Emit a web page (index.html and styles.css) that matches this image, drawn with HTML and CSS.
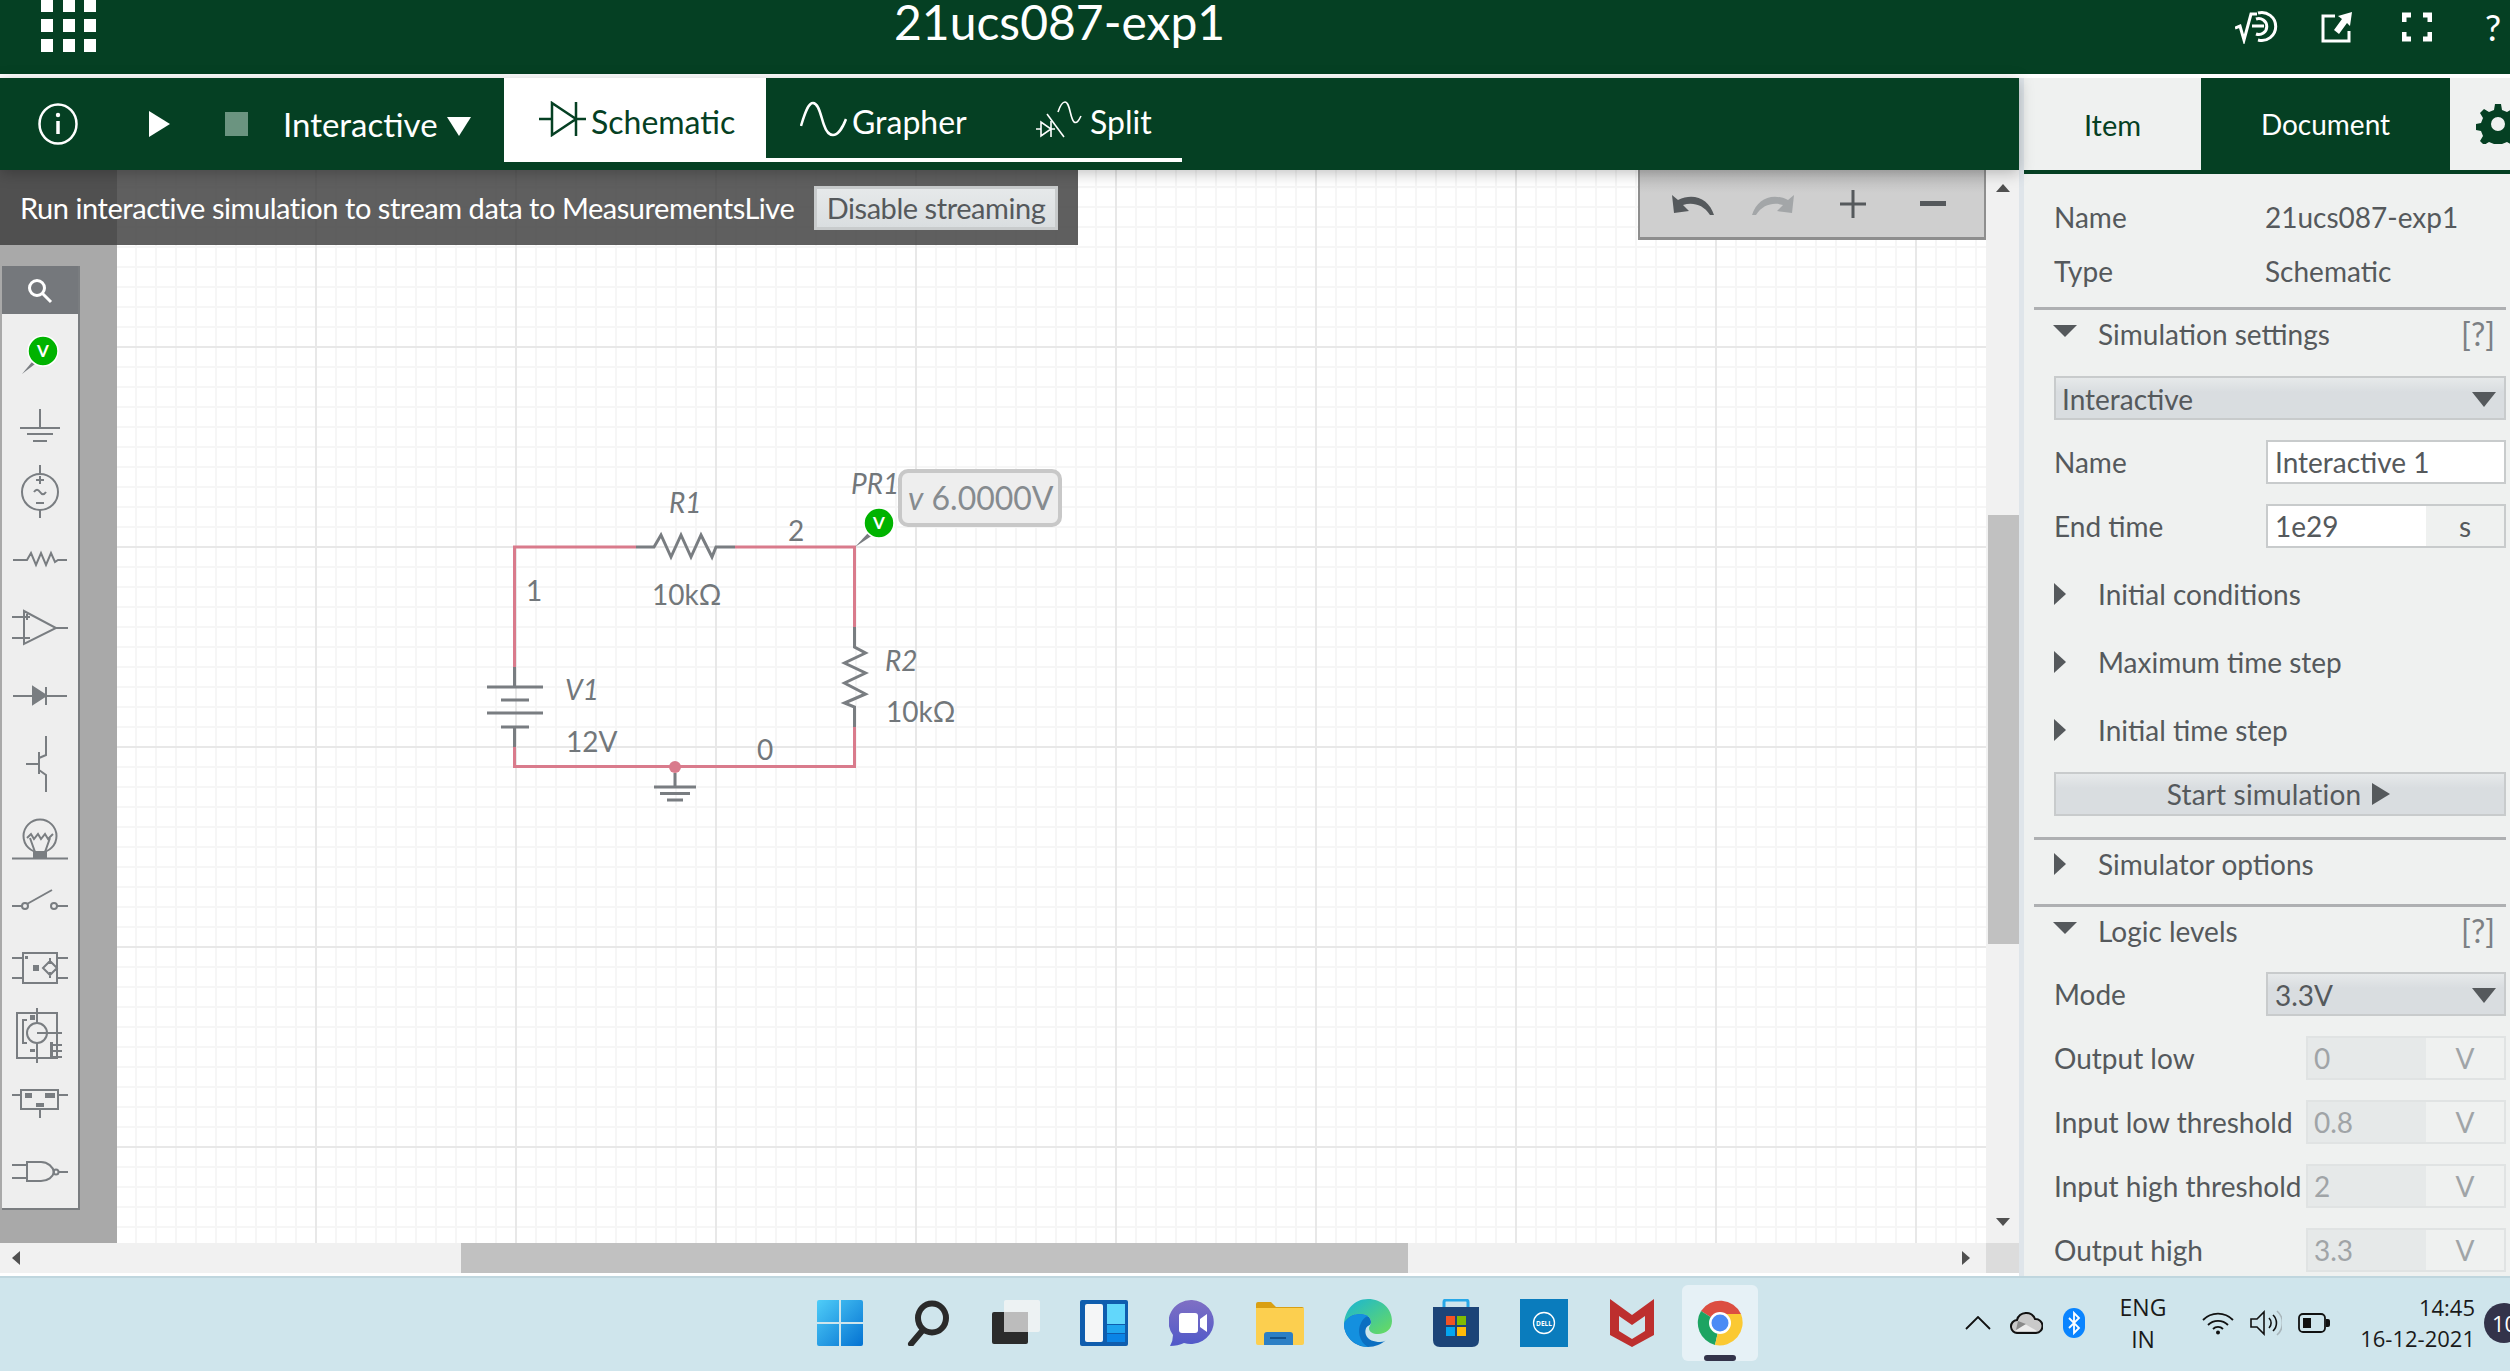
FILE: index.html
```html
<!DOCTYPE html>
<html lang="en">
<head>
    <meta charset="UTF-8">
    <title>21ucs087-exp1</title>
    <link rel="stylesheet" href="styles.css">
</head>
<body>
<div class="app">
    <header class="topbar">
        <svg class="apps" width="56" height="53" viewBox="0 0 56 53" fill="#fff">
            <rect x="0" y="0" width="12" height="12"/><rect x="22" y="0" width="12" height="12"/><rect x="43" y="0" width="12" height="12"/>
            <rect x="0" y="19" width="12" height="13"/><rect x="22" y="19" width="12" height="13"/><rect x="43" y="19" width="12" height="13"/>
            <rect x="0" y="39" width="12" height="13"/><rect x="22" y="39" width="12" height="13"/><rect x="43" y="39" width="12" height="13"/>
        </svg>
        <div class="doc-title">21ucs087-exp1</div>
        <div class="top-icons">
            <svg width="48" height="34" viewBox="0 0 48 34" fill="none" stroke="#fff" stroke-width="3">
                <path d="M0 18l5-2 4 14 7-26h6"/>
                <path d="M23 3a14 14 0 1 1 0 27"/>
                <path d="M21 9a8 8 0 1 1 0 15M17 16h12"/>
            </svg>
            <svg class="icon-popout" width="32" height="32" viewBox="0 0 32 32" fill="none" stroke="#fff" stroke-width="3">
                <path d="M14 5H2v25h26V20"/>
                <path d="M31 1l-14 4 4 3-8 11 5 4 8-11 3 3z" fill="#fff" stroke="none"/>
            </svg>
            <svg class="icon-full" width="30" height="30" viewBox="0 0 30 30" fill="none" stroke="#fff" stroke-width="5">
                <path d="M2 10V3h7M21 3h7v7M28 20v7h-7M9 27H2v-7"/>
            </svg>
            <span class="top-help">?</span>
        </div>
    </header>

    <div class="workspace">
        <main class="stage">
            <nav class="toolbar">
                <svg class="tool-info" width="40" height="42" viewBox="0 0 40 42" fill="none" stroke="#fff" stroke-width="2.5">
                    <ellipse cx="20" cy="21" rx="18.5" ry="19.5"/>
                    <path d="M20 18v13" stroke-width="3.5"/>
                    <circle cx="20" cy="12" r="2.2" fill="#fff" stroke="none"/>
                </svg>
                <span class="tool-play"></span>
                <span class="tool-stop"></span>
                <span class="tool-mode">Interactive <i class="tri-down"></i></span>
                <div class="view-tabs">
                    <div class="view-tab view-tab-on">
                        <svg width="47" height="36" viewBox="0 0 47 36" fill="none" stroke="#054023" stroke-width="2.5">
                            <path d="M0 18h13M37 18h10M37 1v34M13 2l24 16-24 16z"/>
                        </svg>
                        Schematic
                    </div>
                    <div class="view-tab view-tab-grapher">
                        <svg width="47" height="36" viewBox="0 0 47 36" fill="none" stroke="#fff" stroke-width="2.5">
                            <path d="M1 25C6 8 9 2 13 2c6 0 8 14 11 22 2 6 5 10 9 10 5 0 10-8 13-16"/>
                        </svg>
                        Grapher
                    </div>
                    <div class="view-tab view-tab-split">
                        <svg width="46" height="38" viewBox="0 0 46 38" fill="none" stroke="#fff" stroke-width="1.6">
                            <path d="M0 29h5M5 22v14l10-7-10-7zM15 21v16M15 29h4"/>
                            <path d="M11 14l17 23"/>
                            <path d="M22 12c2-6 4-10 7-10 5 0 5 16 9 20 3 2 5-2 7-6"/>
                        </svg>
                        Split
                    </div>
                </div>
            </nav>

            <section class="canvas-row">
                <aside class="palette-col">
                    <div class="palette">
                        <div class="palette-search">
                            <svg width="26" height="26" viewBox="0 0 26 26" fill="none" stroke="#fff" stroke-width="3">
                                <circle cx="10" cy="10" r="7.5"/><path d="M15.500 15.500L24 24"/>
                            </svg>
                        </div>
                        <svg class="palette-parts" width="76" height="894" viewBox="2 314 76 894" fill="none" stroke="#797d81" stroke-width="2">
                            <path d="M22 374l10-12 3 2z" fill="#797d81" stroke="none"/>
                            <circle cx="43" cy="351" r="15" fill="#00b300" stroke="#fff" stroke-width="1.500"/>
                            <text class="probe-v" x="43" y="357" text-anchor="middle">V</text>

                            <path d="M40 409v19M20 428h40M27 434h26M33 441h14"/>

                            <path d="M40 465v10M40 510v8M36 480h8M40 476v8M36 503h8M34 492c2-3 4-3 6 0s4 3 6 0"/>
                            <circle cx="40" cy="492" r="18"/>

                            <path d="M13 560h14l4-7 5 12 5-12 5 12 5-12 4 9 3-2h9"/>

                            <path d="M24 611v33l32-16zM12 617h16M12 638h18M56 628h12M24 617h6M27 614v6"/>

                            <path d="M13 696h20M46 696h21M46 687v18"/>
                            <path d="M33 687v17l13-8.500z" fill="#797d81"/>

                            <path d="M46 736v19l-7 3M39 752v22M26 764h13M39 770l7 5v17"/>

                            <circle cx="40" cy="836" r="16.500"/>
                            <path d="M27 838l4-4 3 5 4-5 3 5 4-5 3 5 5-5M30 838l5 14M50 838l-5 14M12 858.500h56"/>
                            <path d="M34 852h12v6H34z" fill="#797d81"/>

                            <path d="M12 906h10M27 904l25-14M57 906h11"/>
                            <circle cx="25" cy="906" r="3"/><circle cx="54" cy="906" r="3"/>

                            <path d="M23 953h34v30H23zM12 958h11M57 958h11M12 978h11M57 978h11M50 961l7 7-7 7-7-7zM50 958v6M50 972v6"/>
                            <path d="M33 965h6v6h-6zM25 956h3v3h-3z" fill="#797d81" stroke="none"/>

                            <path d="M17 1013h40v45H17zM37 1008v15M37 1043v20M27 1020h-4v23h4M37 1033h25M50 1045h12M50 1051h12M50 1057h12"/>
                            <circle cx="37" cy="1033" r="10"/>
                            <path d="M30 1015h5v5h-5zM30 1049h5v3h-5zM50 1042h3v14h-3z" fill="#797d81" stroke="none"/>

                            <path d="M21 1090h37v19H21zM12 1095h9M58 1095h10M40 1109v9"/>
                            <path d="M25 1093h7v5h-7zM45 1093h10v5H45zM36 1103h8v4h-8z" fill="#797d81" stroke="none"/>

                            <path d="M12 1165h15M12 1178h15M27 1162h14c7 0 12 5 13 10-1 5-6 9-13 9H27zM59 1172h9"/>
                            <circle cx="56" cy="1172" r="2.500"/>
                        </svg>
                    </div>
                </aside>

                <div class="canvas">
                    <svg class="circuit" width="1869" height="1073" viewBox="117 170 1869 1073" fill="none">
                        <g class="wire">
                            <path d="M514.500 667V547H636M735 547H854.500V627M854.500 727V766.500H514.500V747"/>
                            <circle class="node" cx="675" cy="767" r="6"/>
                        </g>
                        <g class="part">
                            <path d="M636 547h18l7-12 10 22 10-22 10 22 10-22 11 22 4-10h19"/>
                            <path d="M854.500 627v20l11 6-21 10 21 10-21 10 21 11-21 9 10 4v20"/>
                            <path d="M514.500 667v20M487 687h56M501 700h28M487 713h56M501 727h28M514.500 727v20"/>
                            <path d="M675 773v14M654 787h42M660 793.500h30M667 800h16"/>
                        </g>
                        <path d="M855 547l14-15 4 3z" fill="#797d81"/>
                        <circle cx="879" cy="523" r="15" fill="#00b300" stroke="#fff" stroke-width="1.500"/>
                        <text class="probe-v" x="879" y="529" text-anchor="middle">V</text>
                        <rect class="readout" x="900" y="471" width="160" height="54" rx="8"/>
                        <text class="lbl readout-text" x="908" y="510"><tspan class="it">v</tspan> 6.0000V</text>
                        <text class="lbl it" x="669" y="513">R1</text>
                        <text class="lbl" x="788" y="541">2</text>
                        <text class="lbl it" x="851" y="494">PR1</text>
                        <text class="lbl" x="526" y="601">1</text>
                        <text class="lbl" x="652" y="605">10kΩ</text>
                        <text class="lbl it" x="885" y="671">R2</text>
                        <text class="lbl" x="886" y="722">10kΩ</text>
                        <text class="lbl it" x="565" y="700">V1</text>
                        <text class="lbl" x="566" y="752">12V</text>
                        <text class="lbl" x="757" y="760">0</text>
                    </svg>
                </div>

                <div class="vscroll">
                    <i class="arrow-up"></i>
                    <div class="vscroll-track"><div class="vscroll-thumb"></div></div>
                    <i class="arrow-dn"></i>
                </div>

                <div class="stream-banner">
                    <span>Run interactive simulation to stream data to MeasurementsLive</span>
                    <button class="stream-btn">Disable streaming</button>
                </div>

                <div class="zoom-tools">
                    <span class="zoom-btn"><svg width="42" height="22" viewBox="0 0 42 22" fill="#55595c"><path d="M0 2l2 18 15-2-6-6c9-3 20-1 27 10h4C37 6 22-1 6 7z"/></svg></span>
                    <span class="zoom-btn"><svg width="42" height="22" viewBox="0 0 42 22" fill="#a3a6a8"><path d="M42 2l-2 18-15-2 6-6c-9-3-20-1-27 10H0C5 6 20-1 36 7z"/></svg></span>
                    <span class="zoom-btn"><svg width="26" height="28" viewBox="0 0 26 28" fill="#55595c"><path d="M0 12.500h26v3H0zM11.500 0h3v28h-3z"/></svg></span>
                    <span class="zoom-btn"><svg width="26" height="6" viewBox="0 0 26 6" fill="#55595c"><path d="M0 0h26v5H0z"/></svg></span>
                </div>
            </section>

            <div class="hscroll">
                <i class="arrow-lt"></i>
                <div class="hscroll-thumb"></div>
                <i class="arrow-rt"></i>
                <div class="hscroll-corner"></div>
            </div>
        </main>

        <aside class="side">
            <div class="side-tabs">
                <div class="side-tab side-tab-item">Item</div>
                <div class="side-tab side-tab-doc">Document</div>
                <div class="side-tab side-tab-gear">
                    <svg width="44" height="40" viewBox="0 0 44 40" fill="#054023">
                        <path fill-rule="evenodd" d="M19 0h6l1 6 5 2 5-3 4 4-3 5 2 5 5 1v6l-5 1-2 5 3 5-4 4-5-3-5 2-1 6h-6l-1-6-5-2-5 3-4-4 3-5-2-5-5-1v-6l5-1 2-5-3-5 4-4 5 3 5-2zM22 13a7 7 0 1 0 0 14 7 7 0 0 0 0-14z"/>
                    </svg>
                </div>
            </div>

            <div class="side-body">
                <div class="info-row"><span class="info-key">Name</span><span>21ucs087-exp1</span></div>
                <div class="info-row"><span class="info-key">Type</span><span>Schematic</span></div>

                <div class="sec-line"></div>
                <div class="sec-head"><i class="tri-open"></i><span>Simulation settings</span><em>[?]</em></div>
                <div class="picker picker-wide">Interactive<i class="tri-pick"></i></div>
                <div class="field"><label>Name</label><div class="box box-wide">Interactive 1</div></div>
                <div class="field"><label>End time</label><div class="box box-wide box-unit"><span>1e29</span><b>s</b></div></div>
                <div class="fold fold-first"><i class="tri-shut"></i>Initial conditions</div>
                <div class="fold"><i class="tri-shut"></i>Maximum time step</div>
                <div class="fold"><i class="tri-shut"></i>Initial time step</div>
                <button class="start-btn">Start simulation <i class="tri-start"></i></button>

                <div class="sec-line sec-line-gap"></div>
                <div class="sec-head"><i class="tri-shut"></i><span>Simulator options</span></div>
                <div class="sec-line sec-line-mid"></div>
                <div class="sec-head"><i class="tri-open"></i><span>Logic levels</span><em>[?]</em></div>
                <div class="field field-mode"><label>Mode</label><div class="picker box-wide">3.3V<i class="tri-pick"></i></div></div>
                <div class="field"><label>Output low</label><div class="box box-off"><span>0</span><b>V</b></div></div>
                <div class="field"><label>Input low threshold</label><div class="box box-off"><span>0.8</span><b>V</b></div></div>
                <div class="field"><label>Input high threshold</label><div class="box box-off"><span>2</span><b>V</b></div></div>
                <div class="field"><label>Output high</label><div class="box box-off"><span>3.3</span><b>V</b></div></div>
            </div>
        </aside>
    </div>

    <footer class="taskbar">
        <div class="slot">
            <svg width="46" height="46" viewBox="0 0 46 46">
                <defs>
                    <linearGradient id="winBlue" x1="0" y1="0" x2="1" y2="1"><stop offset="0" stop-color="#4fcdf8"/><stop offset="1" stop-color="#0472d2"/></linearGradient>
                </defs>
                <path d="M2 0h20v22H0V2a2 2 0 0 1 2-2zM24 0h20a2 2 0 0 1 2 2v20H24zM0 24h22v22H2a2 2 0 0 1-2-2zM24 24h22v20a2 2 0 0 1-2 2H24z" fill="url(#winBlue)"/>
            </svg>
        </div>
        <div class="slot">
            <svg width="44" height="46" viewBox="0 0 44 46" fill="none" stroke="#2a2a2a" stroke-width="6">
                <ellipse cx="26" cy="18" rx="14" ry="14.500"/><path d="M16 31L5 44" stroke-linecap="round"/>
            </svg>
        </div>
        <div class="slot">
            <svg width="48" height="46" viewBox="0 0 48 46">
                <rect x="0" y="12" width="36" height="32" rx="2" fill="#2b2b2b"/>
                <rect x="12" y="0" width="36" height="32" rx="2" fill="#f2f4f4" fill-opacity=".85"/>
                <rect x="12" y="12" width="24" height="20" fill="#bcbcbc"/>
            </svg>
        </div>
        <div class="slot">
            <svg width="48" height="46" viewBox="0 0 48 46">
                <rect width="48" height="46" rx="2" fill="#0f5dae"/>
                <rect x="5" y="4" width="18" height="38" rx="2" fill="#f5f6f7"/>
                <rect x="27" y="4" width="18" height="20" fill="#62d7fb"/>
                <rect x="27" y="25" width="18" height="8" fill="#1ea4ee"/>
                <rect x="27" y="34" width="18" height="8" fill="#0a84e6"/>
            </svg>
        </div>
        <div class="slot">
            <svg width="46" height="46" viewBox="0 0 46 46">
                <defs>
                    <linearGradient id="chatFill" x1="0" y1="0" x2="0" y2="1"><stop offset="0" stop-color="#7f70c4"/><stop offset="1" stop-color="#5059c9"/></linearGradient>
                </defs>
                <path d="M23 0a23 22 0 1 1-8 43q-6 3-14 3 3-5 3-11A23 22 0 0 1 23 0z" fill="url(#chatFill)"/>
                <rect x="10" y="13" width="19" height="20" rx="3" fill="#fff"/>
                <path d="M31 19l7-5v18l-7-5z" fill="#fff"/>
            </svg>
        </div>
        <div class="slot">
            <svg width="48" height="44" viewBox="0 0 48 44">
                <path d="M0 3a2 2 0 0 1 2-2h13l5 5h26a2 2 0 0 1 2 2v6H0z" fill="#d99f13"/>
                <path d="M0 7h48v35a2 2 0 0 1-2 2H2a2 2 0 0 1-2-2z" fill="#fccf4f"/>
                <path d="M8 44V34a3 3 0 0 1 3-3h23a3 3 0 0 1 3 3v10z" fill="#2c7fc5"/>
                <path d="M14 37h16" stroke="#11518f" stroke-width="2"/>
            </svg>
        </div>
        <div class="slot">
            <svg width="48" height="48" viewBox="0 0 48 48">
                <defs>
                    <linearGradient id="edgeTop" x1="0" y1="0" x2="1" y2="1"><stop offset="0" stop-color="#18b4d8"/><stop offset="1" stop-color="#6bdc5c"/></linearGradient>
                </defs>
                <path d="M24 0c14 0 24 10 24 22 0 8-6 13-14 13-5 0-9-2-9-6 0-2 2-3 2-6 0-5-5-8-11-8C10 15 2 20 0 25 1 11 10 0 24 0z" fill="url(#edgeTop)"/>
                <path d="M0 25c2-6 9-10 16-10 6 0 11 3 11 8 0 2-1 3-3 4-3 2-3 6-2 9 2 5 8 7 14 7 3 0 5-1 6-2-4 4-11 7-18 7C10 48 0 37 0 25z" fill="#0c6fc1"/>
                <path d="M17 24c-4 7-2 19 7 24C10 47 0 37 0 25c2-6 9-10 16-10 3 0 6 1 8 2-3 1-6 4-7 7z" fill="#1490df"/>
            </svg>
        </div>
        <div class="slot">
            <svg width="46" height="48" viewBox="0 0 46 48">
                <path d="M11 8V3q0-2 2-2h20q2 0 2 2v5" fill="none" stroke="#27a8e8" stroke-width="3"/>
                <path d="M0 8h46v33q0 7-7 7H7q-7 0-7-7z" fill="#1c4478"/>
                <rect x="13" y="17" width="9" height="9" fill="#f25325"/>
                <rect x="24" y="17" width="9" height="9" fill="#80bb02"/>
                <rect x="13" y="28" width="9" height="9" fill="#05a6f0"/>
                <rect x="24" y="28" width="9" height="9" fill="#ffba08"/>
            </svg>
        </div>
        <div class="slot">
            <div class="dell-tile">
                <svg width="24" height="24" viewBox="0 0 24 24" fill="none" stroke="#fff" stroke-width="1.300">
                    <circle cx="12" cy="12" r="10.500"/>
                    <text class="dell-word" x="12" y="14.500" text-anchor="middle">DELL</text>
                </svg>
            </div>
        </div>
        <div class="slot">
            <svg width="44" height="48" viewBox="0 0 44 48">
                <path d="M0 0l22 16L44 0v36L22 48 0 36zM9 17v15l13 8 13-8V17l-13 9z" fill="#bd2f2e" fill-rule="evenodd"/>
            </svg>
        </div>
        <div class="slot slot-on">
            <svg width="46" height="46" viewBox="0 0 46 46">
                <path d="M23 23L4 11A23 23 0 0 1 44 14z" fill="#dc4e41"/>
                <path d="M4 11a23 23 0 0 0 14 34l5-22z" fill="#1da462"/>
                <path d="M44 14H23v9l-5 22A23 23 0 0 0 44 14z" fill="#fbc932"/>
                <circle cx="23" cy="23" r="11" fill="#fff"/>
                <circle cx="23" cy="23" r="8.500" fill="#4b8bf5"/>
            </svg>
            <i class="slot-bar"></i>
        </div>

        <div class="tray">
            <div class="tray-slot">
                <svg width="26" height="14" viewBox="0 0 26 14" fill="none" stroke="#111" stroke-width="1.800"><path d="M1 13L13 1l12 12"/></svg>
            </div>
            <div class="tray-slot">
                <svg width="33" height="22" viewBox="0 0 33 22">
                    <path d="M8 21a6.500 6.500 0 0 1-1-13 9.500 9.500 0 0 1 18-1 7 7 0 0 1 1 14z" fill="#c9c9c9" stroke="#111" stroke-width="2"/>
                    <path d="M5 19l10-7 12 7z" fill="#ececec"/>
                    <path d="M8 9l8 3-10 6z" fill="#8a8a8a"/>
                </svg>
            </div>
            <div class="tray-slot">
                <svg width="22" height="30" viewBox="0 0 22 30">
                    <rect width="22" height="30" rx="11" fill="#0a84ff"/>
                    <path d="M6 10l10 10-5 5V5l5 5-10 10" fill="none" stroke="#fff" stroke-width="1.800"/>
                </svg>
            </div>
            <div class="tray-lang"><span>ENG</span><span>IN</span></div>
            <div class="tray-slot">
                <svg width="32" height="24" viewBox="0 0 32 24" fill="none" stroke="#111" stroke-width="1.800">
                    <path d="M1 9a21 21 0 0 1 30 0M6 14a14 14 0 0 1 20 0M11 18a7 7 0 0 1 10 0"/>
                    <circle cx="16" cy="21.500" r="2" fill="#111" stroke="none"/>
                </svg>
            </div>
            <div class="tray-slot">
                <svg width="32" height="26" viewBox="0 0 32 26" fill="none" stroke="#111" stroke-width="1.600">
                    <path d="M1 9h6l7-7v22l-7-7H1z"/>
                    <path d="M19 8a7 7 0 0 1 0 10M23 5a11 11 0 0 1 0 16"/>
                    <path d="M27 1a16 16 0 0 1 0 24" stroke="#a9b6bb"/>
                </svg>
            </div>
            <div class="tray-slot">
                <svg width="32" height="20" viewBox="0 0 32 20">
                    <rect x="1" y="1" width="26" height="18" rx="4" fill="none" stroke="#111" stroke-width="1.800"/>
                    <rect x="5" y="5" width="8" height="10" fill="#111"/>
                    <path d="M28 6h2a2 2 0 0 1 2 2v4a2 2 0 0 1-2 2h-2z" fill="#111"/>
                </svg>
            </div>
            <div class="tray-clock"><span>14:45</span><span>16-12-2021</span></div>
            <div class="tray-badge">10</div>
        </div>
    </footer>
</div>
</body>
</html>
```

FILE: styles.css
```css
* {
    box-sizing: border-box;
}
body {
    margin: 0;
    font-family: "Lato", sans-serif;
    color: #55595c;
    overflow: hidden;
}
i {
    display: block;
}
.app {
    width: 2510px;
    height: 1371px;
    display: flex;
    flex-direction: column;
    overflow: hidden;
}

/* top bar */
.topbar {
    height: 78px;
    flex: none;
    display: flex;
    align-items: flex-start;
    background-color: #054023;
    border-bottom: 4px solid #fff;
    color: #fff;
}
.apps {
    margin-left: 41px;
    flex: none;
}
.doc-title {
    margin-left: 797px;
    margin-top: -7px;
    font-size: 48px;
    line-height: 58px;
    white-space: nowrap;
}
.top-icons {
    margin-left: auto;
    display: flex;
    align-items: center;
    margin-top: 10px;
    margin-right: 9px;
}
.icon-popout {
    margin-left: 38px;
}
.icon-full {
    margin-left: 49px;
}
.top-help {
    font-size: 36px;
    line-height: 30px;
    margin-left: 53px;
}

.workspace {
    height: 1198px;
    flex: none;
    display: flex;
}
.stage {
    width: 2019px;
    flex: none;
    display: flex;
    flex-direction: column;
}

/* toolbar */
.toolbar {
    height: 92px;
    flex: none;
    display: flex;
    align-items: center;
    background-color: #054023;
    color: #fff;
    position: relative;
    z-index: 2;
    box-shadow: 0 3px 14px rgba(0,0,0,0.25);
}
.tool-info {
    margin-left: 38px;
}
.tool-play {
    margin-left: 71px;
    width: 0;
    height: 0;
    border-top: 13px solid transparent;
    border-bottom: 13px solid transparent;
    border-left: 21px solid #fff;
}
.tool-stop {
    margin-left: 55px;
    width: 23px;
    height: 24px;
    background-color: #6b9480;
}
.tool-mode {
    margin-left: 35px;
    width: 221px;
    display: flex;
    align-items: center;
    gap: 9px;
    font-size: 33px;
}
.tri-down {
    width: 0;
    height: 0;
    border-left: 12px solid transparent;
    border-right: 12px solid transparent;
    border-top: 19px solid #fff;
    margin-top: 4px;
}
.view-tabs {
    align-self: flex-end;
    height: 84px;
    margin-bottom: 8px;
    display: flex;
    width: 678px;
    border-bottom: 4px solid #fff;
    font-size: 32px;
}
.view-tab {
    display: flex;
    align-items: center;
    gap: 5px;
    padding-top: 6px;
    color: #fff;
}
.view-tab svg {
    margin-top: -4px;
}
.view-tab-on {
    width: 262px;
    padding-left: 35px;
    background-color: #fff;
    color: #054023;
}
.view-tab-grapher {
    padding-left: 34px;
    width: 270px;
}
.view-tab-split {
    gap: 8px;
}

/* canvas */
.canvas-row {
    height: 1073px;
    flex: none;
    display: flex;
    position: relative;
}
.palette-col {
    width: 117px;
    flex: none;
    background-color: #a9a9a9;
    padding-top: 96px;
    padding-left: 2px;
}
.palette {
    width: 78px;
    height: 944px;
    background-color: #eeeeee;
    border: solid #7a7d80;
    border-width: 0 2px 2px 0;
}
.palette-search {
    height: 48px;
    padding-top: 2px;
    background-color: #75787c;
    display: flex;
    align-items: center;
    justify-content: center;
}
.palette-parts {
    display: block;
}
.probe-v {
    fill: #fff;
    stroke: none;
    font-size: 17px;
    font-weight: 700;
}
.canvas {
    flex: 1;
    position: relative;
    overflow: hidden;
    background-color: #fff;
    background-image:
        linear-gradient(to right, #e8e8e8 2px, transparent 2px),
        linear-gradient(to bottom, #e8e8e8 2px, transparent 2px),
        linear-gradient(to right, #f6f6f6 2px, transparent 2px),
        linear-gradient(to bottom, #f6f6f6 2px, transparent 2px);
    background-size: 200px 200px, 200px 200px, 20px 20px, 20px 20px;
    background-position: 198px 0, 0 176px, 18px 0, 0 16px;
}
.circuit {
    position: absolute;
    left: 0;
    top: 0;
}
.wire path {
    stroke: #d97b8c;
    stroke-width: 3;
}
.node {
    fill: #d97b8c;
}
.part path {
    stroke: #797d81;
    stroke-width: 3;
}
.readout {
    fill: #eeeeee;
    stroke: #c8c8c8;
    stroke-width: 4;
}
.lbl {
    font-family: "Lato", sans-serif;
    font-size: 28px;
    fill: #72777b;
}
.readout-text {
    font-size: 32px;
    fill: #868b8f;
}
.it {
    font-style: italic;
}

/* scrollbars */
.vscroll {
    width: 33px;
    flex: none;
    background-color: #f1f1f1;
    display: flex;
    flex-direction: column;
    align-items: center;
}
.vscroll-track {
    flex: 1;
    width: 100%;
    padding-top: 323px;
}
.vscroll-thumb {
    height: 429px;
    margin-left: 2px;
    background-color: #c1c1c1;
}
.arrow-up,
.arrow-dn,
.arrow-lt,
.arrow-rt {
    width: 0;
    height: 0;
    flex: none;
}
.arrow-up {
    margin-top: 14px;
    border-left: 7px solid transparent;
    border-right: 7px solid transparent;
    border-bottom: 8px solid #505050;
}
.arrow-dn {
    margin-bottom: 17px;
    border-left: 7px solid transparent;
    border-right: 7px solid transparent;
    border-top: 8px solid #505050;
}
.hscroll {
    height: 30px;
    flex: none;
    display: flex;
    align-items: center;
    background-color: #f1f1f1;
}
.arrow-lt {
    margin-left: 12px;
    border-top: 7px solid transparent;
    border-bottom: 7px solid transparent;
    border-right: 8px solid #505050;
}
.arrow-rt {
    margin-left: 554px;
    border-top: 7px solid transparent;
    border-bottom: 7px solid transparent;
    border-left: 8px solid #505050;
}
.hscroll-thumb {
    margin-left: 441px;
    width: 947px;
    height: 100%;
    background-color: #c1c1c1;
}
.hscroll-corner {
    margin-left: auto;
    width: 33px;
    height: 100%;
    background-color: #dcdcdc;
}

/* overlays on the canvas */
.stream-banner {
    position: absolute;
    left: 0;
    top: 0;
    width: 1078px;
    height: 75px;
    padding: 0 20px;
    display: flex;
    align-items: center;
    justify-content: space-between;
    background-color: rgba(60,60,60,0.82);
    color: #fff;
    font-size: 29px;
    letter-spacing: -0.45px;
    white-space: nowrap;
}
.stream-btn {
    width: 244px;
    height: 44px;
    padding: 0;
    font-family: inherit;
    font-size: 29px;
    letter-spacing: -0.45px;
    color: #55595c;
    background: linear-gradient(#e6e9ea, #dadee0);
    border: 3px solid #c8cbcc;
}
.zoom-tools {
    position: absolute;
    left: 1638px;
    top: 0;
    width: 348px;
    height: 70px;
    padding-left: 13px;
    display: flex;
    align-items: center;
    background: linear-gradient(#bdbdbd, #cfcfcf 35%);
    border: solid #8e8e8e;
    border-width: 0 2px 3px 2px;
}
.zoom-btn {
    width: 80px;
    flex: none;
    display: flex;
    align-items: center;
    justify-content: center;
}

/* right panel */
.side {
    width: 491px;
    flex: none;
    background-color: #eff1f0;
    border-left: 5px solid #dfe5ea;
    overflow: hidden;
}
.side-tabs {
    height: 96px;
    display: flex;
    border-bottom: 4px solid #054023;
    font-size: 29px;
}
.side-tab {
    display: flex;
    align-items: center;
    justify-content: center;
    flex: none;
}
.side-tab-item {
    width: 177px;
    color: #054023;
}
.side-tab-doc {
    width: 249px;
    background-color: #054023;
    color: #fff;
    font-size: 28px;
}
.side-tab-gear {
    flex: 1;
    min-width: 0;
    justify-content: flex-start;
    padding-left: 26px;
    overflow: hidden;
}
.side-tab-gear svg {
    flex: none;
}
.side-body {
    padding: 16px 4px 0 10px;
    font-size: 28px;
}
.info-row {
    height: 54px;
    padding-left: 20px;
    display: flex;
    align-items: center;
}
.info-key {
    width: 211px;
}
.sec-line {
    height: 3px;
    margin-top: 9px;
    background-color: #aeb0b2;
}
.sec-line-gap {
    margin-top: 21px;
}
.sec-line-mid {
    margin-top: 12px;
}
.sec-head {
    height: 52px;
    padding-left: 19px;
    padding-bottom: 5px;
    display: flex;
    align-items: center;
}
.sec-head span {
    margin-left: 44px;
}
.sec-head .tri-shut {
    margin-left: 1px;
}
.sec-head em {
    margin-left: auto;
    margin-right: 11px;
    font-style: normal;
    font-size: 32px;
    color: #7c8084;
}
.tri-open {
    width: 0;
    height: 0;
    flex: none;
    margin-right: -23px;
    margin-top: -6px;
    border-left: 12px solid transparent;
    border-right: 12px solid transparent;
    border-top: 12px solid #55595c;
}
.tri-shut {
    width: 0;
    height: 0;
    flex: none;
    margin-right: -12px;
    border-top: 11px solid transparent;
    border-bottom: 11px solid transparent;
    border-left: 12px solid #55595c;
}
.picker {
    height: 44px;
    display: flex;
    align-items: center;
    justify-content: space-between;
    padding: 2px 8px 0 3px;
    background: linear-gradient(#e6e9ea, #d9dde0 35%);
    border: 2px solid #c8cbcc;
}
.picker-wide {
    margin-top: 14px;
    margin-left: 20px;
    padding-left: 6px;
}
.tri-pick {
    width: 0;
    height: 0;
    border-left: 12px solid transparent;
    border-right: 12px solid transparent;
    border-top: 15px solid #55595c;
}
.field {
    height: 44px;
    margin-top: 20px;
    padding-left: 20px;
    display: flex;
    align-items: center;
    justify-content: space-between;
    white-space: nowrap;
}
.field-mode {
    margin-top: 13px;
}
.box {
    height: 44px;
    padding-top: 0;
    display: flex;
    align-items: center;
    background-color: #fff;
    border: 2px solid #c8cbcc;
    flex: none;
}
.box-wide {
    width: 240px;
    padding-left: 7px;
}
.box-unit {
    padding-left: 0;
}
.box span {
    width: 158px;
    padding-left: 7px;
    flex: none;
}
.box b {
    flex: 1;
    height: 100%;
    font-weight: 400;
    text-align: center;
    line-height: 40px;
    background-color: #eff1f0;
}
.box-off {
    width: 200px;
    color: #a0a4a7;
    border-color: #e0e3e3;
    background-color: #e6e9e9;
}
.box-off span {
    width: 118px;
    padding-left: 6px;
}
.fold {
    height: 68px;
    padding-left: 20px;
    padding-bottom: 2px;
    display: flex;
    align-items: center;
}
.fold .tri-shut {
    margin-right: 32px;
}
.fold-first {
    margin-top: 13px;
}
.start-btn {
    margin-left: 20px;
    width: calc(100% - 20px);
    margin-top: 7px;
    height: 44px;
    padding: 0 3px 0 0;
    display: flex;
    align-items: center;
    justify-content: center;
    gap: 11px;
    font-family: inherit;
    font-size: 28px;
    letter-spacing: 0.15px;
    color: #55595c;
    background: linear-gradient(#e6e9ea, #d9dde0 35%);
    border: 2px solid #c8cbcc;
}
.tri-start {
    width: 0;
    height: 0;
    border-top: 11px solid transparent;
    border-bottom: 11px solid transparent;
    border-left: 18px solid #55595c;
}

/* windows taskbar */
.taskbar {
    height: 95px;
    flex: none;
    display: flex;
    align-items: center;
    padding-left: 796px;
    padding-bottom: 3px;
    background-color: #cfe5ec;
    border-top: 2px solid #bfd6de;
    font-family: "Open Sans", sans-serif;
    color: #1a1a1a;
}
.slot {
    width: 88px;
    height: 76px;
    flex: none;
    display: flex;
    align-items: center;
    justify-content: center;
    position: relative;
}
.slot-on {
    background-color: #e6f1f6;
    border-radius: 6px;
    width: 76px;
    margin-left: 6px;
}
.slot-bar {
    position: absolute;
    left: 22px;
    bottom: 0;
    width: 32px;
    height: 6px;
    border-radius: 3px;
    background-color: #33334a;
}
.dell-tile {
    width: 48px;
    height: 48px;
    background-color: #0a7cbd;
    display: flex;
    align-items: center;
    justify-content: center;
}
.dell-word {
    fill: #fff;
    stroke: none;
    font-size: 6.500px;
    font-weight: 700;
}
.tray {
    display: flex;
    align-items: center;
    margin-left: 196px;
    flex: none;
}
.tray-slot {
    width: 48px;
    flex: none;
    display: flex;
    align-items: center;
    justify-content: center;
}
.tray-lang {
    width: 90px;
    margin-right: 6px;
    display: flex;
    flex-direction: column;
    align-items: center;
    font-size: 23px;
    line-height: 32px;
}
.tray-clock {
    width: 137px;
    display: flex;
    flex-direction: column;
    align-items: flex-end;
    font-size: 22px;
    line-height: 31px;
}
.tray-badge {
    width: 40px;
    height: 40px;
    margin-left: 9px;
    flex: none;
    border-radius: 50%;
    background-color: #33334a;
    color: #fff;
    font-size: 22px;
    line-height: 40px;
    padding-left: 8px;
}
```
